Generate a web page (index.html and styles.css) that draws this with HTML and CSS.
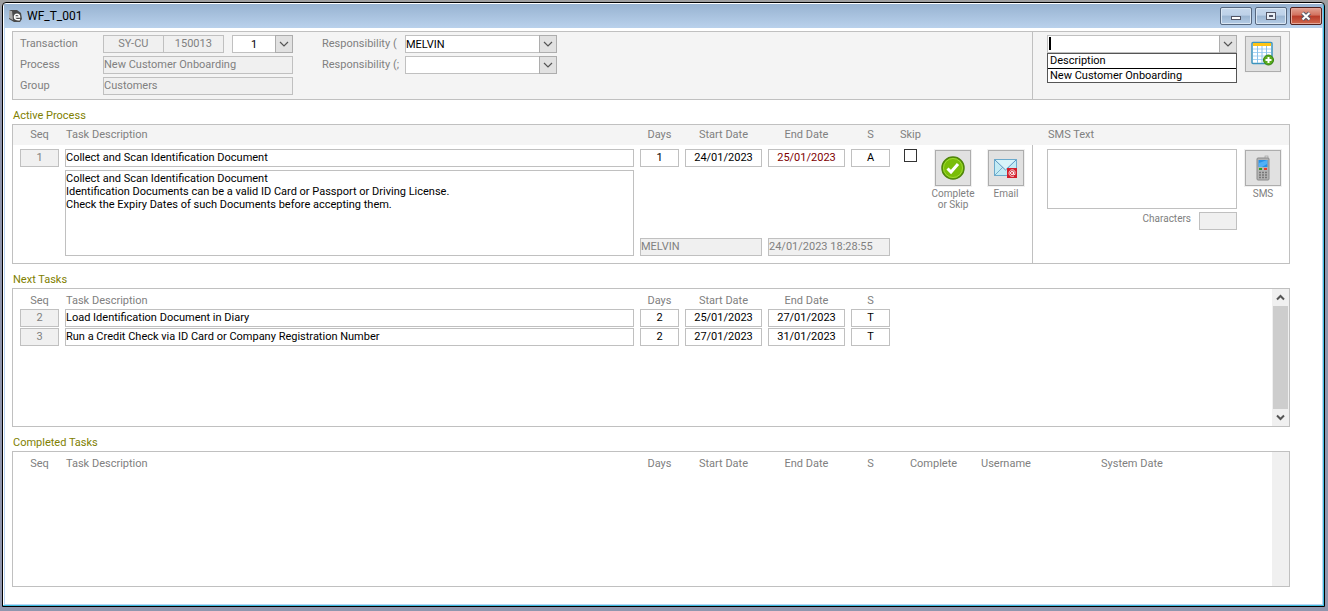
FILE: index.html
```html
<!DOCTYPE html>
<html lang="en">
<head>
  <meta charset="UTF-8" />
  <meta name="viewport" content="width=device-width, initial-scale=1.0" />
  <title>WF_T_001</title>
  <link rel="stylesheet" href="styles.css">
</head>
<body>
  <div class="window">
    <header class="titlebar">
      <svg class="app-icon" width="15" height="15" viewBox="0 0 15 15">
        <path d="M1 2L3 1H9L13 4L14 10L12 13H6L1 10Z" fill="#4a4a4a" />
        <path d="M1 2L4 2L5 11L1 9Z" fill="#aaa" />
        <path d="M6.500 8H11.500C11.500 4.500 6.500 4 6.500 8C6.500 10.500 9 11 12 10.500" fill="none" stroke="#fff" stroke-width="1.500" />
      </svg>
      <h1 class="title">WF_T_001</h1>
      <div class="window-controls">
        <button type="button" class="win-btn" aria-label="Minimize">
          <svg width="12" height="12" viewBox="0 0 12 12"><rect x="1.500" y="6.500" width="9" height="3" fill="#fff" stroke="#535666" /></svg>
        </button>
        <button type="button" class="win-btn win-max" aria-label="Maximize">
          <svg width="12" height="12" viewBox="0 0 12 12"><rect x="1.500" y="2.500" width="9" height="7" fill="#e8eef6" stroke="#535666" /><rect x="4.500" y="5.500" width="3" height="1" fill="#fff" stroke="#535666" /></svg>
        </button>
        <button type="button" class="win-btn win-close" aria-label="Close">
          <svg width="12" height="12" viewBox="0 0 12 12"><path d="M2.500 3L9.500 9.500M9.500 3L2.500 9.500" stroke="#555a6a" stroke-width="4" /><path d="M2.500 3L9.500 9.500M9.500 3L2.500 9.500" stroke="#fff" stroke-width="2" /></svg>
        </button>
      </div>
    </header>

    <main class="content">
      <!-- transaction header -->
      <section class="panel header-panel">
        <div class="header-fields">
          <div class="form-grid">
            <label for="trans-type">Transaction</label>
            <div class="trans-row">
              <div class="trans-ids">
                <input type="text" id="trans-type" class="field readonly center" value="SY-CU" readonly />
                <input type="text" class="field readonly center" value="150013" aria-label="Transaction number" readonly />
              </div>
              <div class="combo combo-small">
                <select class="field center" aria-label="Transaction line"><option>1</option></select>
                <span class="arrow"><svg width="10" height="6" viewBox="0 0 10 6"><path d="M1 1L5 5L9 1" /></svg></span>
              </div>
            </div>
            <label for="process">Process</label>
            <input type="text" id="process" class="field readonly" value="New Customer Onboarding" readonly />
            <label for="group">Group</label>
            <input type="text" id="group" class="field readonly" value="Customers" readonly />
          </div>
          <div class="form-grid resp-grid">
            <label for="resp1">Responsibility (</label>
            <div class="combo">
              <select id="resp1" class="field"><option>MELVIN</option></select>
              <span class="arrow"><svg width="10" height="6" viewBox="0 0 10 6"><path d="M1 1L5 5L9 1" /></svg></span>
            </div>
            <label for="resp2">Responsibility (;</label>
            <div class="combo">
              <select id="resp2" class="field"><option></option></select>
              <span class="arrow"><svg width="10" height="6" viewBox="0 0 10 6"><path d="M1 1L5 5L9 1" /></svg></span>
            </div>
          </div>
        </div>
        <div class="header-side">
          <div class="combo combo-search">
            <input type="text" class="field" aria-label="Process template" />
            <span class="caret"></span>
            <span class="arrow"><svg width="10" height="6" viewBox="0 0 10 6"><path d="M1 1L5 5L9 1" /></svg></span>
            <ul class="menu">
              <li>Description</li>
              <li>New Customer Onboarding</li>
            </ul>
          </div>
          <button type="button" class="icon-btn" aria-label="Add process">
            <svg width="24" height="26" viewBox="0 0 24 26">
              <rect x="1" y="1.500" width="20" height="21" rx="1" fill="#fff" stroke="#3c94bd" stroke-width="1.500" />
              <rect x="2" y="2" width="18" height="3" fill="#ffc414" />
              <path d="M2 8H20M2 11.500H20M2 15H20M2 18.500H20" stroke="#a8d4f4" />
              <path d="M6.500 5V22M11 5V22M15.500 5V22" stroke="#8dc1ea" />
              <circle cx="17.500" cy="19" r="5" fill="#58aa1c" stroke="#35820c" />
              <path d="M17.500 16V22M14.500 19H20.500" stroke="#fff" stroke-width="2" />
            </svg>
          </button>
        </div>
      </section>

      <h2 class="section-title">Active Process</h2>
      <section class="panel active-panel">
        <div class="active-main">
          <div class="task-grid strip">
            <span class="center">Seq</span>
            <span class="desc-head">Task Description</span>
            <span class="center">Days</span>
            <span class="center">Start Date</span>
            <span class="center">End Date</span>
            <span class="center">S</span>
            <label for="skip" class="center">Skip</label>
          </div>
          <div class="task-grid active-body">
            <input type="text" class="field readonly center" value="1" aria-label="Seq" readonly />
            <input type="text" class="field" value="Collect and Scan Identification Document" aria-label="Task Description" />
            <input type="text" class="field center" value="1" aria-label="Days" />
            <input type="text" class="field center" value="24/01/2023" aria-label="Start Date" />
            <input type="text" class="field center overdue" value="25/01/2023" aria-label="End Date" />
            <input type="text" class="field center" value="A" aria-label="S" />
            <input type="checkbox" id="skip" class="checkbox" />
            <div class="action">
              <button type="button" class="icon-btn" id="complete" aria-labelledby="complete-text">
                <svg width="24" height="24" viewBox="0 0 24 24">
                  <circle cx="12" cy="12" r="11" fill="#79bd08" stroke="#4f850b" stroke-width="1.500" />
                  <circle cx="12" cy="12" r="9.500" fill="none" stroke="#a0dc35" />
                  <path d="M6.500 12.500L10 16L17 8" fill="none" stroke="#fff" stroke-width="3" />
                </svg>
              </button>
              <span id="complete-text">Complete<br />or Skip</span>
            </div>
            <div class="action">
              <button type="button" class="icon-btn" id="email" aria-labelledby="email-text">
                <svg width="26" height="22" viewBox="0 0 26 22">
                  <rect x="1.500" y="2.500" width="22" height="16" fill="#c3ebf4" stroke="#6caacc" />
                  <path d="M2 18L10 10M23 18L15 10" stroke="#75adcd" />
                  <path d="M2 3L12.500 13L23 3" fill="#d7f4fa" stroke="#5c94c0" />
                  <rect x="14" y="11" width="10" height="10" fill="#d31f2b" />
                  <circle cx="19" cy="16" r="1.500" fill="none" stroke="#fff" />
                  <path d="M20.500 14.500V17.500H22V15C22 12 16 12 16 16C16 19 19 20 21 19" fill="none" stroke="#fff" stroke-width=".8" />
                </svg>
              </button>
              <span id="email-text">Email</span>
            </div>
            <textarea class="field notes" aria-label="Task notes">Collect and Scan Identification Document
Identification Documents can be a valid ID Card or Passport or Driving License.
Check the Expiry Dates of such Documents before accepting them.</textarea>
            <input type="text" class="field readonly stamp-user" value="MELVIN" aria-label="Username" readonly />
            <input type="text" class="field readonly stamp-date" value="24/01/2023 18:28:55" aria-label="System Date" readonly />
          </div>
        </div>
        <div class="active-side">
          <div class="strip side-strip"><label for="sms-text">SMS Text</label></div>
          <div class="side-body">
            <div class="sms-box">
              <textarea id="sms-text" class="field sms-text"></textarea>
              <div class="chars">
                <label for="chars">Characters</label>
                <input type="text" id="chars" class="field readonly" readonly />
              </div>
            </div>
            <div class="action">
              <button type="button" class="icon-btn" id="sms" aria-labelledby="sms-label">
                <svg width="16" height="26" viewBox="0 0 16 26">
                  <rect x="10" y="1" width="3" height="5" fill="#ddd" stroke="#999" stroke-width=".6" />
                  <rect x="2" y="3" width="12" height="22" rx="1" fill="#b4b4b4" stroke="#8a8a8a" />
                  <rect x="3.500" y="5" width="9" height="7" fill="#2690e8" />
                  <path d="M4 8L12 5V9L7 12H4Z" fill="#51b0f6" />
                  <path d="M4 14H7" stroke="#30a020" stroke-width="2" />
                  <path d="M9 14H12" stroke="#e43a32" stroke-width="2" />
                  <path d="M4 17.500H12M4 20H12M4 22.500H12" stroke="#777" stroke-width="1.500" stroke-dasharray="2 1" />
                </svg>
              </button>
              <span id="sms-label">SMS</span>
            </div>
          </div>
        </div>
      </section>

      <h2 class="section-title">Next Tasks</h2>
      <section class="panel list-panel next-panel">
        <table class="task-table">
          <colgroup>
            <col class="c-seq"><col><col class="c-days"><col class="c-date"><col class="c-date"><col class="c-status"><col class="c-rest">
          </colgroup>
          <thead>
            <tr><th>Seq</th><th class="desc-head">Task Description</th><th>Days</th><th>Start Date</th><th>End Date</th><th>S</th><td></td></tr>
          </thead>
          <tbody>
            <tr>
              <td><input type="text" class="field readonly center" value="2" aria-label="Seq" readonly /></td>
              <td><input type="text" class="field" value="Load Identification Document in Diary" aria-label="Task Description" /></td>
              <td><input type="text" class="field center" value="2" aria-label="Days" /></td>
              <td><input type="text" class="field center" value="25/01/2023" aria-label="Start Date" /></td>
              <td><input type="text" class="field center" value="27/01/2023" aria-label="End Date" /></td>
              <td><input type="text" class="field center" value="T" aria-label="S" /></td>
              <td></td>
            </tr>
            <tr>
              <td><input type="text" class="field readonly center" value="3" aria-label="Seq" readonly /></td>
              <td><input type="text" class="field" value="Run a Credit Check via ID Card or Company Registration Number" aria-label="Task Description" /></td>
              <td><input type="text" class="field center" value="2" aria-label="Days" /></td>
              <td><input type="text" class="field center" value="27/01/2023" aria-label="Start Date" /></td>
              <td><input type="text" class="field center" value="31/01/2023" aria-label="End Date" /></td>
              <td><input type="text" class="field center" value="T" aria-label="S" /></td>
              <td></td>
            </tr>
          </tbody>
        </table>
        <div class="scrollbar">
          <button type="button" class="scroll-btn" aria-label="Scroll up"><svg width="9" height="7" viewBox="0 0 9 7"><path d="M1 5.500L4.500 2L8 5.500" /></svg></button>
          <div class="thumb"></div>
          <button type="button" class="scroll-btn" aria-label="Scroll down"><svg width="9" height="7" viewBox="0 0 9 7"><path d="M1 1.500L4.500 5L8 1.500" /></svg></button>
        </div>
      </section>

      <h2 class="section-title">Completed Tasks</h2>
      <section class="panel list-panel done-panel">
        <table class="task-table">
          <colgroup>
            <col class="c-seq"><col><col class="c-days"><col class="c-date"><col class="c-date"><col class="c-status"><col class="c-complete"><col class="c-user"><col class="c-system">
          </colgroup>
          <thead>
            <tr><th>Seq</th><th class="desc-head">Task Description</th><th>Days</th><th>Start Date</th><th>End Date</th><th>S</th><th>Complete</th><th class="user-head">Username</th><th class="left">System Date</th></tr>
          </thead>
        </table>
        <div class="scrollbar"></div>
      </section>
    </main>
  </div>
</body>
</html>
```
FILE: styles.css
```css
* { box-sizing: border-box; }
body { margin: 0; min-height: 100vh; display: flex; padding: 2px 3px 4px 2px; background: linear-gradient(#a0a0a0, #9096ae 30px); font-family: Roboto, Tahoma, sans-serif; font-size: 11px; line-height: 14px; color: #808080; }
input, select, textarea, button { font: inherit; margin: 0; padding: 0; border-radius: 0; }

.window { flex: 1; display: flex; flex-direction: column; border: 1px solid #000; border-radius: 4px 4px 0 0; background: #fff; box-shadow: inset -1px -1px #3fbde0, inset 1px 1px #fff; padding: 1px; }
.titlebar { display: flex; align-items: center; height: 24px; padding: 0 1px 0 4px; gap: 4px; background: linear-gradient(#98b3d1, #b9d1ec); flex: none; }
.title { flex: 1; margin: 0; font-size: 12px; font-weight: normal; color: #000; }
.window-controls { display: flex; gap: 3px; }
.win-btn { width: 32px; height: 18px; display: flex; align-items: center; justify-content: center; border: 1px solid #56677e; border-radius: 2px; background: linear-gradient(#c6d8ec, #bdd1e8 45%, #9bb5d1 50%, #b4cce6); box-shadow: inset 0 0 0 1px #d9e6f3; }
.win-close { border-color: #52201c; background: linear-gradient(#e2a394, #d2705d 45%, #b83a28 50%, #d0694e); box-shadow: inset 0 0 0 1px #e4a698; }

.content { flex: 1; padding: 3px 32px 17px 7px; border: 1px solid #bcd5f2; border-top: 0; }
.panel { display: flex; border: 1px solid #c0c0c0; background: #fff; }
.section-title { margin: 0; padding: 9px 1px 1px; font-size: 11px; line-height: 14px; font-weight: normal; color: #808000; }

/* fields */
.field { display: block; width: 100%; min-width: 0; height: 18px; border: 1px solid #c0c0c0; background: #fff; color: #000; padding: 0 0 1px; outline: none; }
.readonly { background: #f0f0f0; color: #808080; }
.center { text-align: center; }
.left { text-align: left; }
.overdue { color: #800000; }
textarea.field { resize: none; line-height: 13px; padding-top: 1px; }
.combo { position: relative; }
.combo select { appearance: none; padding-right: 17px; }
.combo-small { width: 61px; }
.arrow { position: absolute; right: 0; top: 0; width: 18px; height: 18px; display: flex; align-items: center; justify-content: center; background: #e1e1e1; border: 1px solid #adadad; pointer-events: none; }
.arrow path { fill: none; stroke: #555; stroke-width: 1.2; }
.checkbox { appearance: none; width: 13px; height: 13px; border: 1px solid #333; background: #fff; justify-self: center; }
.icon-btn { flex: none; width: 36px; height: 36px; display: flex; align-items: center; justify-content: center; background: #e1e1e1; border: 1px solid #adadad; box-shadow: 0 0 0 1px #f0f0f0; }

/* header */
.header-panel { background: #f4f4f4; }
.header-fields { flex: 1; display: flex; gap: 29px; padding: 3px 7px 4px; }
.form-grid { display: grid; grid-template-columns: 83px 190px; grid-auto-rows: 18px; row-gap: 3px; line-height: 17px; }
.resp-grid { grid-template-columns: 83px 152px; }
.trans-row { display: flex; justify-content: space-between; }
.trans-ids { display: flex; width: 121px; }
.trans-ids .field + .field { border-left: 0; }
.header-side { width: 257px; display: flex; gap: 8px; padding: 3px 0 4px 14px; border-left: 1px solid #c0c0c0; }
.header-side .icon-btn { margin-top: 1px; }
.combo-search { width: 190px; }
.caret { position: absolute; left: 2px; top: 2px; width: 2px; height: 13px; background: #000; }
.menu { position: absolute; left: 0; top: 18px; width: 100%; margin: 0; padding: 0; list-style: none; background: #fff; border: 1px solid #555; color: #000; }
.menu li { padding: 0 2px; line-height: 14px; }
.menu li + li { border-top: 1px solid #000; line-height: 13px; }

/* active process */
.active-main { flex: 1; }
.task-grid { display: grid; grid-template-columns: 39px 1fr 39px 77px 77px 39px 29px 44px 50px; column-gap: 6px; padding: 0 1px 0 7px; }
.strip { height: 20px; line-height: 19px; background: #f4f4f4; }
.desc-head { padding-left: 1px; }
.active-body { grid-template-rows: 18px 86px; row-gap: 3px; padding-top: 4px; padding-bottom: 7px; }
.action { grid-row: 1 / 3; display: flex; flex-direction: column; align-items: center; gap: 2px; padding-top: 1px; font-size: 10px; line-height: 11px; text-align: center; }
.active-body .action:nth-child(8) { grid-column: 8; }
.active-body .action:nth-child(9) { grid-column: 9; }
.notes { grid-row: 2; grid-column: 2; height: 86px; }
.stamp-user { grid-row: 2; grid-column: 3 / 5; align-self: end; }
.stamp-date { grid-row: 2; grid-column: 5 / 7; align-self: end; }
.active-side { width: 257px; display: flex; flex-direction: column; }
.side-strip { padding-left: 16px; }
.side-body { flex: 1; display: flex; gap: 8px; padding: 4px 0 0 14px; border-left: 1px solid #c0c0c0; }
.sms-box { width: 190px; }
.sms-text { height: 60px; }
.chars { display: flex; justify-content: flex-end; gap: 8px; margin-top: 3px; font-size: 10px; }
.chars .field { width: 38px; }

/* task lists */
.list-panel { justify-content: space-between; padding-left: 1px; }
.next-panel { min-height: 139px; }
.done-panel { min-height: 136px; }
.task-table { flex: 1; width: 100%; align-self: flex-start; table-layout: fixed; border-collapse: separate; border-spacing: 6px 1px; }
.task-table th, .task-table td { padding: 0; font-weight: normal; }
.task-table th { padding-top: 4px; line-height: 14px; }
.task-table th.desc-head { text-align: left; padding-left: 1px; }
.task-table th.user-head { text-align: left; padding-left: 4px; }
.task-table th.left { text-align: left; }
.c-seq, .c-days, .c-status { width: 39px; }
.c-date { width: 77px; }
.c-rest { width: 370px; }
.c-complete { width: 75px; }
.c-user { width: 118px; }
.c-system { width: 165px; }
.scrollbar { flex: none; width: 17px; display: flex; flex-direction: column; background: #f0f0f0; }
.scroll-btn { height: 17px; display: flex; align-items: center; justify-content: center; border: 0; background: #f0f0f0; }
.scroll-btn path { fill: none; stroke: #555; stroke-width: 2; }
.thumb { flex: 1; margin: 0 1px; background: #cdcdcd; }
```
